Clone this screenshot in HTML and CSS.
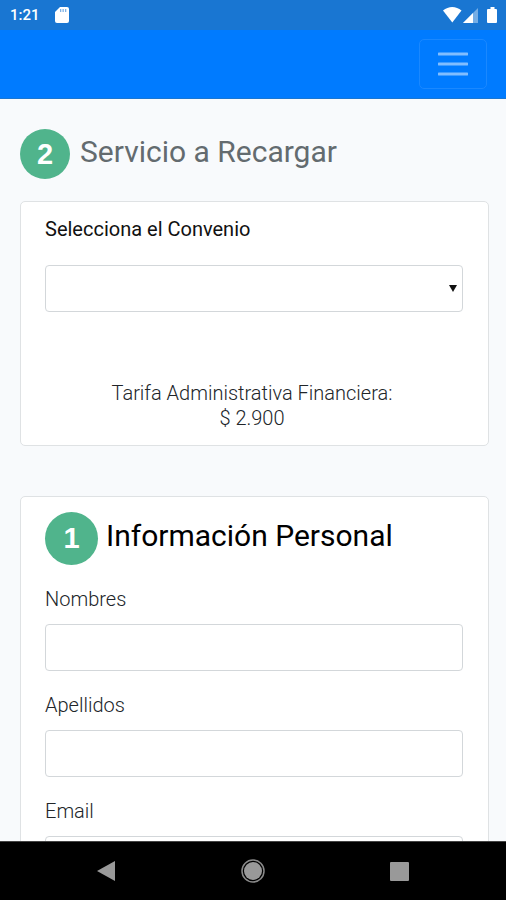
FILE: index.html
```html
<!DOCTYPE html>
<html lang="es">
<head>
<meta charset="utf-8">
<meta name="viewport" content="width=device-width, initial-scale=1">
<title>Servicio a Recargar</title>
<link rel="stylesheet" href="styles.css">
</head>
<body>
<div class="status">
  <span class="status-time">1:21</span>
  <svg class="status-card" width="14" height="16" viewBox="0 0 14 16" aria-hidden="true">
    <path d="M5 0h7a2 2 0 0 1 2 2v12a2 2 0 0 1-2 2H2a2 2 0 0 1-2-2V5z" fill="#fff"/>
    <path d="M5 2h1.300v3H5zM7.500 2h1.300v3H7.500zM10 2h1.300v3H10z" fill="#7fb2e5"/>
  </svg>
  <svg class="status-signals" width="56" height="18" viewBox="0 0 56 18" aria-hidden="true">
    <path d="M1 4.500C6.500-.3 14-.3 19.500 4.500L10.300 16.500z" fill="#fff"/>
    <path d="M36 2v15H21z" fill="#76aee5"/>
    <path d="M31 7V17H21z" fill="#fff"/>
    <path d="M46 3h2.500V1h4v2H54q1 0 1 1v12q0 1-1 1h-8q-1 0-1-1V4q0-1 1-1z" fill="#fff"/>
  </svg>
</div>
<header class="navbar">
  <button class="toggler" type="button" aria-label="Menú">
    <svg width="30" height="24" viewBox="0 0 30 24" aria-hidden="true">
      <path d="M1 2h28M1 12h28M1 22h28" stroke="#80bdff" stroke-width="3" stroke-linecap="round"/>
    </svg>
  </button>
</header>
<main class="content">
  <div class="heading heading-muted">
    <span class="step">2</span>
    <h1 class="title">Servicio a Recargar</h1>
  </div>
  <section class="card card-service">
    <label class="label label-strong" for="convenio">Selecciona el Convenio</label>
    <div class="select-wrap">
      <select class="control" id="convenio"><option></option></select>
      <svg class="arrow" width="8" height="7" viewBox="0 0 8 7" aria-hidden="true"><path d="M0 0h8L4 7z" fill="#111"/></svg>
    </div>
    <p class="fee">Tarifa Administrativa Financiera:<br>$ 2.900</p>
  </section>
  <section class="card card-personal">
    <div class="heading">
      <span class="step step-large">1</span>
      <h2 class="title">Información Personal</h2>
    </div>
    <div class="field">
      <label class="label" for="nombres">Nombres</label>
      <input class="control" id="nombres" type="text">
    </div>
    <div class="field">
      <label class="label" for="apellidos">Apellidos</label>
      <input class="control" id="apellidos" type="text">
    </div>
    <div class="field">
      <label class="label" for="email">Email</label>
      <input class="control" id="email" type="email">
    </div>
  </section>
</main>
<nav class="system">
  <button class="system-button" type="button" aria-label="Atrás">
    <svg width="24" height="24" viewBox="0 0 24 24" aria-hidden="true"><path d="M20 2v20L2 12z" fill="#999"/></svg>
  </button>
  <button class="system-button" type="button" aria-label="Inicio">
    <svg width="24" height="24" viewBox="0 0 24 24" aria-hidden="true"><circle cx="12" cy="12" r="11" fill="none" stroke="#8a8a8a" stroke-width="1.500"/><circle cx="12" cy="12" r="9" fill="#999"/></svg>
  </button>
  <button class="system-button" type="button" aria-label="Recientes">
    <svg width="24" height="24" viewBox="0 0 24 24" aria-hidden="true"><rect x="3" y="3" width="19" height="19" rx="1" fill="#999"/></svg>
  </button>
</nav>
</body>
</html>
```
FILE: styles.css
```css
* {
  box-sizing: border-box;
}

body {
  margin: 0;
  height: 100vh;
  display: flex;
  flex-direction: column;
  overflow: hidden;
  background: #f8fafc;
  color: #212529;
  font-family: Roboto, "Liberation Sans", sans-serif;
  font-size: 20px;
  font-weight: 300;
  line-height: 25px;
}

.status {
  flex: none;
  display: flex;
  align-items: center;
  height: 30px;
  padding: 0 8px 0 10px;
  background: #1976d2;
  color: #fff;
}

.status-time {
  font-size: 15px;
  font-weight: 500;
}

.status-card {
  margin-left: 15px;
}

.status-signals {
  margin-left: auto;
}

.navbar {
  flex: none;
  display: flex;
  justify-content: flex-end;
  padding: 9px 19px;
  background: #007bff;
  border-bottom: 1px solid #1976d2;
}

.toggler {
  display: flex;
  align-items: center;
  justify-content: center;
  width: 68px;
  height: 50px;
  padding: 0;
  background: none;
  border: 1px solid #1a88ff;
  border-radius: 5px;
}

.content {
  flex: 1;
  min-height: 0;
  overflow: hidden;
  padding: 30px 17px 0 20px;
}

.heading {
  display: flex;
  align-items: center;
  gap: 8px;
  color: #111;
}

.heading-muted {
  gap: 10px;
  color: #636b6f;
}

.title {
  margin: 0;
  padding-bottom: 4px;
  font-size: 30px;
  font-weight: 400;
  line-height: 36px;
}

.card-personal .title {
  padding-bottom: 6px;
  color: #000;
}

.step {
  flex: none;
  display: flex;
  align-items: center;
  justify-content: center;
  width: 50px;
  height: 50px;
  border-radius: 50%;
  background: #50b48c;
  color: #fff;
  font-family: "Liberation Sans", sans-serif;
  font-size: 29px;
  font-weight: 700;
}

.step-large {
  width: 53px;
  height: 53px;
}

.card {
  background: #fff;
  border: 1px solid #dfe2e4;
  border-radius: 5px;
}

.card-service {
  margin-top: 22px;
  padding: 15px 25px 14px 24px;
}

.card-personal {
  margin-top: 50px;
  padding: 15px 25px 24px 24px;
}

.label {
  display: block;
  margin-bottom: 12px;
}

.label-strong {
  margin-bottom: 23px;
  color: #111;
  font-weight: 400;
}

.control {
  display: block;
  width: 100%;
  height: 47px;
  padding: 0 12px;
  background: #fff;
  border: 1px solid #d3d7da;
  border-radius: 4px;
  font: inherit;
  color: inherit;
  appearance: none;
}

.select-wrap {
  position: relative;
}

.arrow {
  position: absolute;
  top: 20px;
  right: 6px;
}

.fee {
  margin: 69px 0 0;
  padding-right: 4px;
  text-align: center;
}

.field {
  margin-top: 22px;
}

.system {
  flex: none;
  display: flex;
  justify-content: center;
  gap: 122px;
  height: 59px;
  padding-top: 17px;
  background: #000;
  border-top: 1px solid #444;
}

.system-button {
  display: flex;
  width: 24px;
  height: 24px;
  padding: 0;
  background: none;
  border: 0;
}
```
